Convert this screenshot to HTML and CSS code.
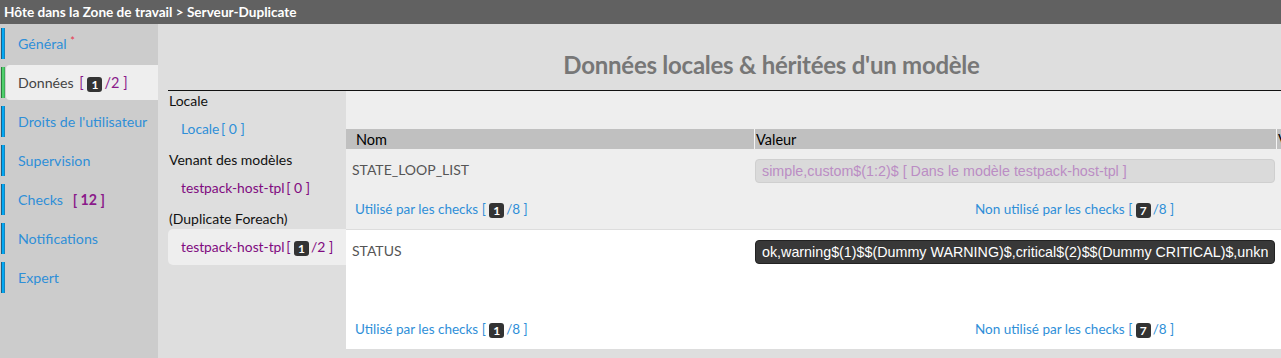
FILE: index.html
```html
<html>

<head>
	<title>Serveur-Duplicate</title>
	<meta charset="utf-8">
	<link rel="stylesheet" href="styles.css">
</head>

<body>
	<div class="topbar">Hôte dans la Zone de travail &gt; Serveur-Duplicate</div>

	<div class="page">
		<ul class="nav">
			<li class="nav-item"><span class="bar"></span><a class="nav-link">Général <span class="req">*</span></a></li>
			<li class="nav-item active"><span class="bar green"></span><a class="nav-link">Données <span class="count">[ <span class="badge">1</span>/2 ]</span></a></li>
			<li class="nav-item"><span class="bar"></span><a class="nav-link">Droits de l'utilisateur</a></li>
			<li class="nav-item"><span class="bar"></span><a class="nav-link">Supervision</a></li>
			<li class="nav-item"><span class="bar"></span><a class="nav-link">Checks <span class="count">[ 12 ]</span></a></li>
			<li class="nav-item"><span class="bar"></span><a class="nav-link">Notifications</a></li>
			<li class="nav-item"><span class="bar"></span><a class="nav-link">Expert</a></li>
		</ul>

		<div class="main">
			<h2 class="title">Données locales &amp; héritées d'un modèle</h2>

			<div class="panels">
				<div class="sources">
					<div class="src-head first">Locale</div>
					<a class="src-item local">Locale <span class="brk">[ 0 ]</span></a>
					<div class="src-head">Venant des modèles</div>
					<a class="src-item tpl">testpack-host-tpl <span class="brk">[ 0 ]</span></a>
					<div class="src-head">(Duplicate Foreach)</div>
					<a class="src-item tpl selected">testpack-host-tpl <span class="brk">[ <span class="badge">1</span>/2 ]</span></a>
				</div>

				<div class="data">
					<div class="grid-head">
						<div class="col-name">Nom</div>
						<div class="col-value">Valeur</div>
						<div class="col-extra">V</div>
					</div>

					<div class="data-row">
						<div class="cells">
							<div class="cell-name">STATE_LOOP_LIST</div>
							<div class="cell-value">
								<input class="val inherited" type="text" disabled value="simple,custom$(1:2)$ [ Dans le modèle testpack-host-tpl ]">
							</div>
						</div>
						<div class="uses">
							<a class="use">Utilisé par les checks [ <span class="badge">1</span>/8 ]</a>
							<a class="use">Non utilisé par les checks [ <span class="badge">7</span>/8 ]</a>
						</div>
					</div>

					<div class="data-row white tall">
						<div class="cells">
							<div class="cell-name">STATUS</div>
							<div class="cell-value">
								<input class="val dark" type="text" value="ok,warning$(1)$$(Dummy WARNING)$,critical$(2)$$(Dummy CRITICAL)$,unknown$(3)$$(Dummy UNKNOWN)$">
							</div>
						</div>
						<div class="uses">
							<a class="use">Utilisé par les checks [ <span class="badge">1</span>/8 ]</a>
							<a class="use">Non utilisé par les checks [ <span class="badge">7</span>/8 ]</a>
						</div>
					</div>
				</div>
			</div>
		</div>
	</div>
</body>
</html>
```

FILE: styles.css
```css
body {
	margin: 0;
	background-color: #cccccc;
	font-family: Lato, "Open Sans", sans-serif;
	font-size: 13.5px;
	color: #222222;
	overflow: hidden;
}

a {
	cursor: pointer;
}

.topbar {
	height: 24px;
	line-height: 24px;
	padding-left: 4px;
	background-color: #616161;
	color: #ffffff;
	font-weight: bold;
	font-size: 13.6px;
}

.page {
	display: flex;
	height: 334px;
}

/* left menu */
.nav {
	width: 158px;
	flex: none;
	margin: 2px 0 0 0;
	padding: 0;
	list-style: none;
}

.nav-item {
	display: flex;
	align-items: center;
	height: 35px;
	margin-bottom: 4px;
}

.bar {
	width: 4px;
	height: 31px;
	margin-left: 1px;
	background-color: #03a9f4;
	box-shadow: inset 1px 0 0 #1c5f86, inset -1px 0 0 #1984bd;
}

.bar.green {
	background-color: #4fcf6c;
	box-shadow: inset 1px 0 0 #2b7c3c, inset -1px 0 0 #3fae58;
}

.nav-link {
	flex: 1;
	height: 35px;
	line-height: 36px;
	margin-left: 1px;
	padding-left: 12px;
	color: #2f8fd8;
	font-size: 14.2px;
	border-radius: 4px 0 0 4px;
}

.nav-item.active .nav-link {
	background-color: #eeeeee;
	color: #444444;
}

.req {
	color: #e8384f;
	font-size: 11px;
	vertical-align: top;
	position: relative;
	top: -3px;
}

.count {
	color: #8a1a8a;
	margin-left: 6px;
	font-weight: bold;
}

.nav-item.active .count {
	font-weight: normal;
	font-size: 14.5px;
	margin-left: 2px;
}

.badge {
	display: inline-block;
	min-width: 13px;
	height: 15px;
	line-height: 15px;
	padding: 0 1px;
	margin-right: 2px;
	border-radius: 3px;
	background-color: #333333;
	color: #ffffff;
	font-size: 12px;
	font-weight: bold;
	text-align: center;
	vertical-align: -1px;
}

/* main */
.main {
	width: 1207px;
	flex: none;
	padding-left: 10px;
	background-color: #dedede;
}

.title {
	margin: 0;
	padding-top: 26px;
	height: 40px;
	line-height: 30px;
	text-align: center;
	font-size: 24px;
	font-weight: bold;
	color: #777777;
	border-bottom: 1px solid #111111;
	letter-spacing: -0.25px;
}

.panels {
	display: flex;
}

.sources {
	width: 178px;
	flex: none;
}

.src-head {
	height: 20px;
	line-height: 20px;
	margin-top: 3px;
	padding-left: 1px;
	color: #111111;
	font-size: 14px;
}

.src-head.first {
	margin-top: 0;
}

.src-item {
	display: block;
	height: 36px;
	line-height: 36px;
	padding-left: 13px;
	border-radius: 5px 0 0 5px;
	font-size: 13.8px;
}

.src-item.local {
	color: #2f8fd8;
}

.src-item.tpl {
	color: #800a80;
}

.src-item.selected {
	background-color: #eeeeee;
}

.brk {
	font-size: 14px;
	margin-left: -2px;
}

.data {
	flex: 1;
	padding-top: 38px;
	background-color: #eeeeee;
}

.grid-head {
	display: flex;
	height: 20px;
	line-height: 21px;
	background-color: #c0c0c0;
	color: #000000;
	font-size: 14.5px;
}

.col-name {
	width: 398px;
	padding-left: 10px;
}

.col-value {
	width: 520px;
	padding-left: 1px;
	border-left: 1px solid #f4f4f4;
}

.col-extra {
	flex: 1;
	padding-left: 1px;
	border-left: 1px solid #f4f4f4;
	white-space: nowrap;
}

.data-row {
	padding: 10px 0 10px 0;
	border-bottom: 1px solid #dddddd;
}

.data-row.white {
	background-color: #ffffff;
}

.cells {
	display: flex;
}

.cell-name {
	width: 402px;
	padding-left: 6px;
	line-height: 22px;
	color: #555555;
	font-size: 14px;
}

.cell-value {
	padding-left: 1px;
}

input.val {
	width: 520px;
	height: 24px;
	box-sizing: border-box;
	padding: 0 6px;
	border-radius: 4px;
	font-family: "Liberation Sans", Arial, sans-serif;
	font-size: 14.3px;
}

input.inherited {
	background-color: #dadada;
	border: 1px solid #cfcfcf;
	color: #bb8dc4;
}

input.dark {
	background-color: #383838;
	border: 1px solid #222222;
	color: #ffffff;
}

.uses {
	display: flex;
	margin-top: 16px;
	height: 20px;
	line-height: 20px;
	padding-left: 9px;
}

.data-row.tall .uses {
	margin-top: 55px;
}

.use {
	color: #2f8fd8;
}

.use:first-child {
	width: 620px;
}
```
